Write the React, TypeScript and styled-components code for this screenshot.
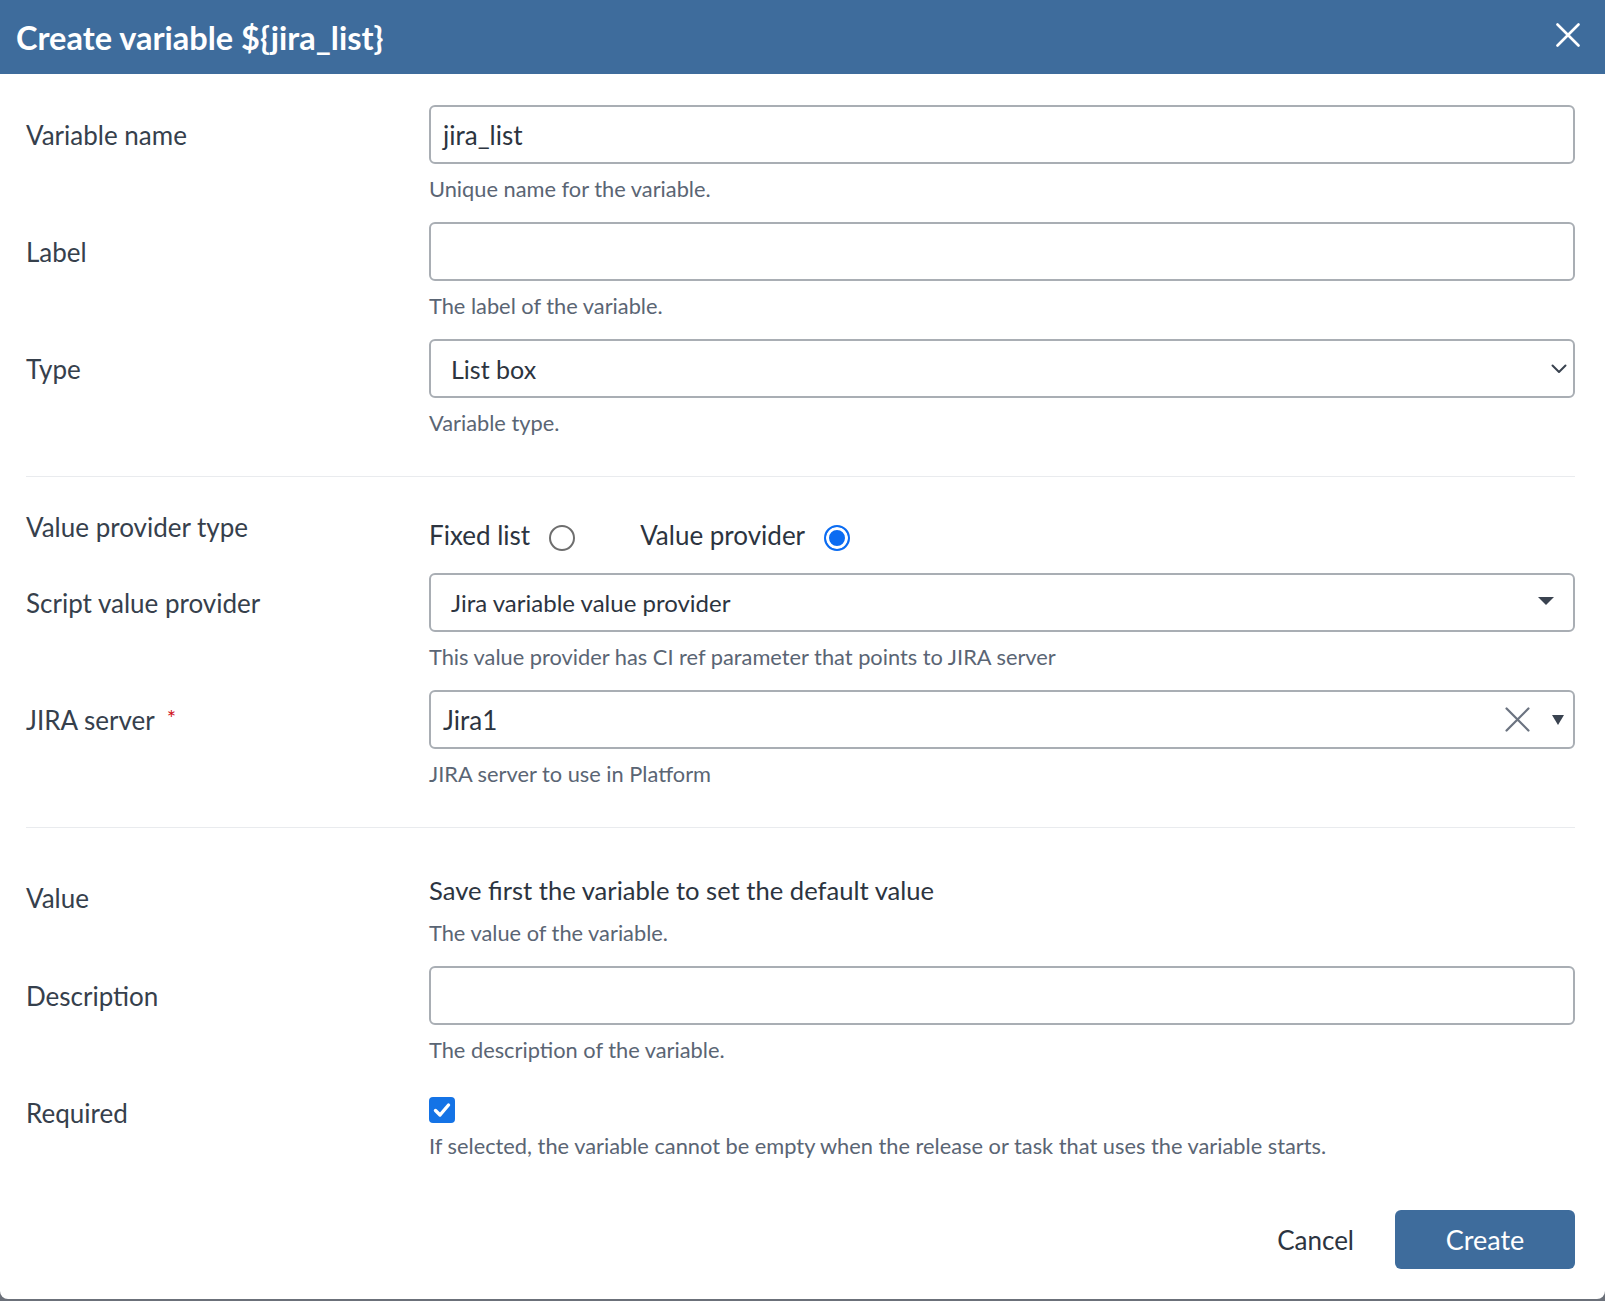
import React, { useState } from 'react';
import styled, { createGlobalStyle } from 'styled-components';

const GlobalStyle = createGlobalStyle`
  html, body {
    margin: 0;
    padding: 0;
    background: #6b7079;
    font-family: Lato, "Open Sans", sans-serif;
  }
  * {
    box-sizing: border-box;
  }
`;

const Dialog = styled.div`
  width: 1605px;
  background: #ffffff;
  border-radius: 0 0 8px 8px;
  overflow: hidden;
`;

const Header = styled.div`
  height: 74px;
  background: #3e6c9c;
  display: flex;
  align-items: center;
  justify-content: space-between;
  padding: 0 25px 0 16px;
`;

const Title = styled.h1`
  margin: 0;
  color: #ffffff;
  font-size: 32.5px;
  font-weight: 700;
`;

const CloseButton = styled.button`
  width: 24px;
  height: 24px;
  padding: 0;
  border: none;
  background: transparent;
  cursor: pointer;
  display: flex;
  margin-top: -4px;
`;

const Body = styled.div`
  padding: 31px 30px 30px 26px;
`;

const Section = styled.div<{ $divider?: boolean; $pt?: number }>`
  padding-top: ${p => p.$pt ?? 0}px;
  padding-bottom: ${p => (p.$divider ? 20 : 0)}px;
  border-bottom: ${p => (p.$divider ? '1px solid #e9ebee' : 'none')};
`;

const FieldRow = styled.div<{ $mb?: number; $mt?: number }>`
  display: grid;
  grid-template-columns: 403px 1fr;
  margin-top: ${p => p.$mt ?? 0}px;
  margin-bottom: ${p => p.$mb ?? 19}px;
`;

const Label = styled.div`
  height: 59px;
  display: flex;
  align-items: center;
  color: #36404c;
  font-size: 26px;
`;

const Asterisk = styled.span`
  color: #d0121b;
  font-size: 22px;
  margin-left: 12px;
  align-self: flex-start;
  margin-top: 14px;
`;

const Control = styled.div<{ $pt?: number }>`
  display: flex;
  flex-direction: column;
  padding-top: ${p => p.$pt ?? 0}px;
`;

const Box = styled.div<{ $pl?: number; $pr?: number; $fs?: number }>`
  height: 59px;
  border: 2px solid #a9aeb4;
  border-radius: 6px;
  display: flex;
  align-items: center;
  padding: 0 ${p => p.$pr ?? 11}px 0 ${p => p.$pl ?? 12}px;
  color: #2c3440;
  font-size: ${p => p.$fs ?? 26}px;
`;

const BoxText = styled.span`
  flex: 1;
`;

const Help = styled.div<{ $mt?: number }>`
  margin-top: ${p => p.$mt ?? 11}px;
  font-size: 21.8px;
  line-height: 28px;
  color: #5a6574;
`;

const Notice = styled.div`
  font-size: 25.6px;
  line-height: 28px;
  color: #2c3440;
`;

const RadioGroup = styled.div`
  display: flex;
  align-items: center;
  gap: 65px;
`;

const RadioOption = styled.label`
  display: flex;
  align-items: center;
  gap: 19px;
  font-size: 26px;
  line-height: 28px;
  color: #2c3440;
  cursor: pointer;
`;

const RadioDot = styled.span<{ $checked: boolean }>`
  width: 26px;
  height: 26px;
  border-radius: 50%;
  margin-top: 6px;
  border: 2px solid ${p => (p.$checked ? '#0b6cf2' : '#6e6e6e')};
  background: ${p => (p.$checked ? '#0b6cf2' : '#ffffff')};
  box-shadow: ${p => (p.$checked ? 'inset 0 0 0 3px #ffffff' : 'none')};
`;

const Checkbox = styled.span`
  width: 26px;
  height: 26px;
  border-radius: 4px;
  background: #1473e6;
  display: flex;
  align-items: center;
  justify-content: center;
`;

const IconSlot = styled.span`
  display: flex;
  align-items: center;
`;

const Footer = styled.div`
  display: flex;
  justify-content: flex-end;
  align-items: center;
  gap: 41px;
  margin-top: 50px;
`;

const TextButton = styled.button`
  border: none;
  background: transparent;
  padding: 0;
  font-family: inherit;
  font-size: 26px;
  color: #2c3440;
  cursor: pointer;
`;

const PrimaryButton = styled.button`
  width: 180px;
  height: 59px;
  border: none;
  border-radius: 6px;
  background: #3e6c9c;
  color: #ffffff;
  font-family: inherit;
  font-size: 27px;
  cursor: pointer;
`;

const Chevron = () => (
  <svg width="16" height="10" viewBox="0 0 16 10">
    <path d="M1.5 1.5 L8 8 L14.5 1.5" fill="none" stroke="#3a4350" strokeWidth="2" strokeLinecap="round" strokeLinejoin="round" />
  </svg>
);

const Caret = ({ w, h }: { w: number; h: number }) => (
  <svg width={w} height={h} viewBox={`0 0 ${w} ${h}`}>
    <path d={`M0 0 L${w} 0 L${w / 2} ${h} Z`} fill="#3a4350" />
  </svg>
);

const Cross = ({ size, color, width }: { size: number; color: string; width: number }) => (
  <svg width={size} height={size} viewBox="0 0 24 24">
    <path d="M1.5 1.5 L22.5 22.5 M22.5 1.5 L1.5 22.5" stroke={color} strokeWidth={width} strokeLinecap="round" />
  </svg>
);

const Tick = () => (
  <svg width="18" height="16" viewBox="0 0 18 16">
    <path d="M2.5 8.5 L7 13 L15.5 3" fill="none" stroke="#ffffff" strokeWidth="3.4" strokeLinecap="round" strokeLinejoin="round" />
  </svg>
);

const App: React.FC = () => {
  const [provider, setProvider] = useState<'fixed' | 'provider'>('provider');

  return (
    <>
      <GlobalStyle />
      <Dialog>
        <Header>
          <Title>{'Create variable ${jira_list}'}</Title>
          <CloseButton aria-label="Close">
            <Cross size={24} color="#ffffff" width={2.6} />
          </CloseButton>
        </Header>

        <Body>
          <Section $divider>
            <FieldRow>
              <Label>Variable name</Label>
              <Control>
                <Box>jira_list</Box>
                <Help>Unique name for the variable.</Help>
              </Control>
            </FieldRow>
            <FieldRow>
              <Label>Label</Label>
              <Control>
                <Box />
                <Help>The label of the variable.</Help>
              </Control>
            </FieldRow>
            <FieldRow>
              <Label>Type</Label>
              <Control>
                <Box $pl={20} $pr={6} $fs={25}>
                  <BoxText>List box</BoxText>
                  <IconSlot>
                    <Chevron />
                  </IconSlot>
                </Box>
                <Help>Variable type.</Help>
              </Control>
            </FieldRow>
          </Section>

          <Section $divider $pt={20}>
            <FieldRow $mb={17}>
              <Label>Value provider type</Label>
              <Control $pt={22}>
                <RadioGroup>
                  <RadioOption onClick={() => setProvider('fixed')}>
                    Fixed list
                    <RadioDot $checked={provider === 'fixed'} />
                  </RadioOption>
                  <RadioOption onClick={() => setProvider('provider')}>
                    Value provider
                    <RadioDot $checked={provider === 'provider'} />
                  </RadioOption>
                </RadioGroup>
              </Control>
            </FieldRow>
            <FieldRow>
              <Label>Script value provider</Label>
              <Control>
                <Box $pl={20} $pr={19} $fs={24}>
                  <BoxText>Jira variable value provider</BoxText>
                  <IconSlot style={{ marginTop: -4 }}>
                    <Caret w={16} h={8} />
                  </IconSlot>
                </Box>
                <Help>This value provider has CI ref parameter that points to JIRA server</Help>
              </Control>
            </FieldRow>
            <FieldRow>
              <Label>
                JIRA server<Asterisk>*</Asterisk>
              </Label>
              <Control>
                <Box $pr={9}>
                  <BoxText>Jira1</BoxText>
                  <IconSlot style={{ marginRight: 22 }}>
                    <Cross size={25} color="#6b7380" width={2.2} />
                  </IconSlot>
                  <IconSlot>
                    <Caret w={12} h={10} />
                  </IconSlot>
                </Box>
                <Help>JIRA server to use in Platform</Help>
              </Control>
            </FieldRow>
          </Section>

          <Section $pt={40}>
            <FieldRow>
              <Label>Value</Label>
              <Control $pt={8}>
                <Notice>Save first the variable to set the default value</Notice>
                <Help $mt={15}>The value of the variable.</Help>
              </Control>
            </FieldRow>
            <FieldRow>
              <Label>Description</Label>
              <Control>
                <Box />
                <Help>The description of the variable.</Help>
              </Control>
            </FieldRow>
            <FieldRow $mb={0}>
              <Label>Required</Label>
              <Control $pt={14}>
                <Checkbox>
                  <Tick />
                </Checkbox>
                <Help $mt={9}>
                  If selected, the variable cannot be empty when the release or task that uses the variable starts.
                </Help>
              </Control>
            </FieldRow>
          </Section>

          <Footer>
            <TextButton>Cancel</TextButton>
            <PrimaryButton>Create</PrimaryButton>
          </Footer>
        </Body>
      </Dialog>
    </>
  );
};

export default App;
